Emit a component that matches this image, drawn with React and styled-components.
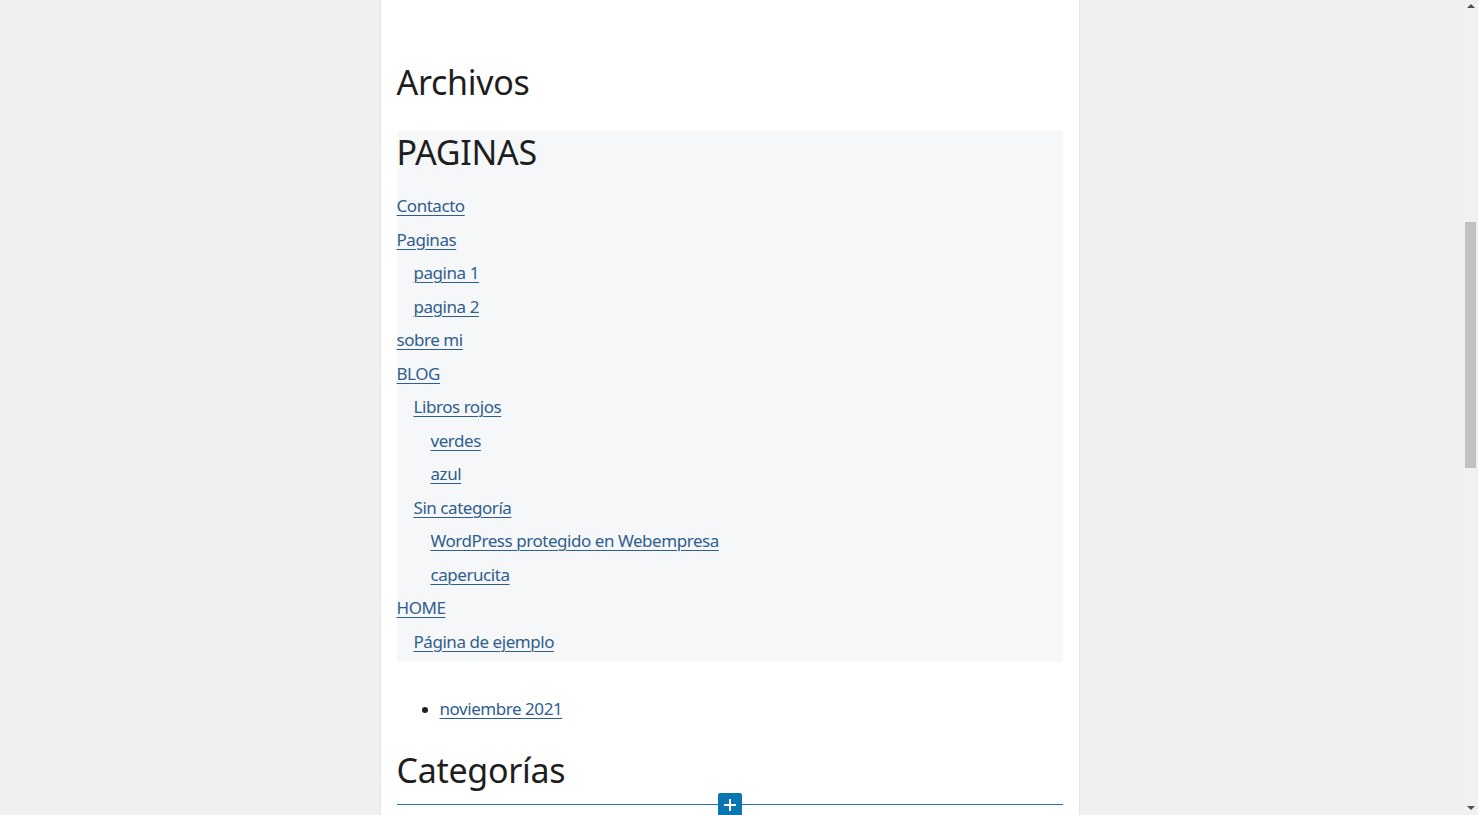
import React from "react";
import styled, { createGlobalStyle } from "styled-components";

const Global = createGlobalStyle`
  html, body { margin: 0; padding: 0; height: 100%; overflow: hidden; }
  body { background: #f0f0f0; font-family: "Noto Sans", "Open Sans", sans-serif; color: #1e1e1e; }
`;

const Page = styled.div`
  display: flex;
  height: 815px;
  overflow: hidden;
`;

const Main = styled.div`
  flex: 1;
  display: flex;
  justify-content: center;
  padding-right: 4px;
`;

const Column = styled.div`
  width: 666px;
  background: #fff;
  border-left: 1px solid #e4e4e4;
  border-right: 1px solid #e4e4e4;
  padding: 61px 16px 0 16px;
  display: flex;
  flex-direction: column;
`;

const Heading = styled.h2`
  font-size: 34px;
  font-weight: 400;
  line-height: 43px;
  margin: 0 0 ${(p) => p.$mb || 0}px;
  letter-spacing: -0.3px;
`;

const PagesBox = styled.div`
  background: #f6f7f9;
  padding: 0 0 4px;
  margin-bottom: 33px;
`;

const PagesList = styled.ul`
  list-style: none;
  margin: 15px 0 0;
  padding: 0;
`;

const Item = styled.li`
  font-size: 17px;
  line-height: 33.5px;
  letter-spacing: -0.45px;
  padding-left: ${(p) => p.$level * 17}px;
`;

const Link = styled.a`
  color: #2f5e8e;
  text-decoration: underline;
  text-underline-offset: 3px;
  text-decoration-thickness: 1px;
`;

const BulletList = styled.ul`
  margin: 0 0 27px;
  padding-left: 43px;
  list-style: disc;
`;

const Bullet = styled.li`
  font-size: 17px;
  line-height: 27px;
  letter-spacing: -0.45px;
  &::marker { font-size: 16px; }
`;

const Inserter = styled.div`
  position: relative;
  margin-top: 12px;
  height: 1px;
  background: #1d7aa6;
`;

const PlusButton = styled.div`
  position: absolute;
  left: 50%;
  top: -11px;
  transform: translateX(-50%);
  width: 24px;
  height: 24px;
  background: #0a75b3;
  border-radius: 2px;
  display: flex;
  align-items: center;
  justify-content: center;
`;

const Scrollbar = styled.div`
  width: 15px;
  background: #f1f1f1;
  display: flex;
  flex-direction: column;
  align-items: center;
  position: relative;
`;

const Arrow = styled.div`
  width: 0;
  height: 0;
  border-left: 4px solid transparent;
  border-right: 4px solid transparent;
  ${(p) => (p.$down ? "border-top: 4px solid #505050;" : "border-bottom: 4px solid #505050;")}
  margin: ${(p) => (p.$down ? "auto 0 5px" : "4px 0 0")};
`;

const Thumb = styled.div`
  position: absolute;
  left: 2px;
  top: 222px;
  width: 11px;
  height: 246px;
  background: #c1c1c1;
`;

const pages = [
  ["Contacto", 0],
  ["Paginas", 0],
  ["pagina 1", 1],
  ["pagina 2", 1],
  ["sobre mi", 0],
  ["BLOG", 0],
  ["Libros rojos", 1],
  ["verdes", 2],
  ["azul", 2],
  ["Sin categoría", 1],
  ["WordPress protegido en Webempresa", 2],
  ["caperucita", 2],
  ["HOME", 0],
  ["Página de ejemplo", 1],
];

export default function App() {
  return (
    <>
      <Global />
      <Page>
        <Main>
          <Column>
            <Heading $mb={27}>Archivos</Heading>
            <PagesBox>
              <Heading>PAGINAS</Heading>
              <PagesList>
                {pages.map(([t, l]) => (
                  <Item key={t} $level={l}>
                    <Link href="#">{t}</Link>
                  </Item>
                ))}
              </PagesList>
            </PagesBox>
            <BulletList>
              <Bullet>
                <Link href="#">noviembre 2021</Link>
              </Bullet>
            </BulletList>
            <Heading>Categorías</Heading>
            <Inserter>
              <PlusButton>
                <svg width="14" height="14" viewBox="0 0 14 14">
                  <path d="M7 1v12M1 7h12" stroke="#fff" strokeWidth="2" />
                </svg>
              </PlusButton>
            </Inserter>
          </Column>
        </Main>
        <Scrollbar>
          <Arrow />
          <Thumb />
          <Arrow $down />
        </Scrollbar>
      </Page>
    </>
  );
}
